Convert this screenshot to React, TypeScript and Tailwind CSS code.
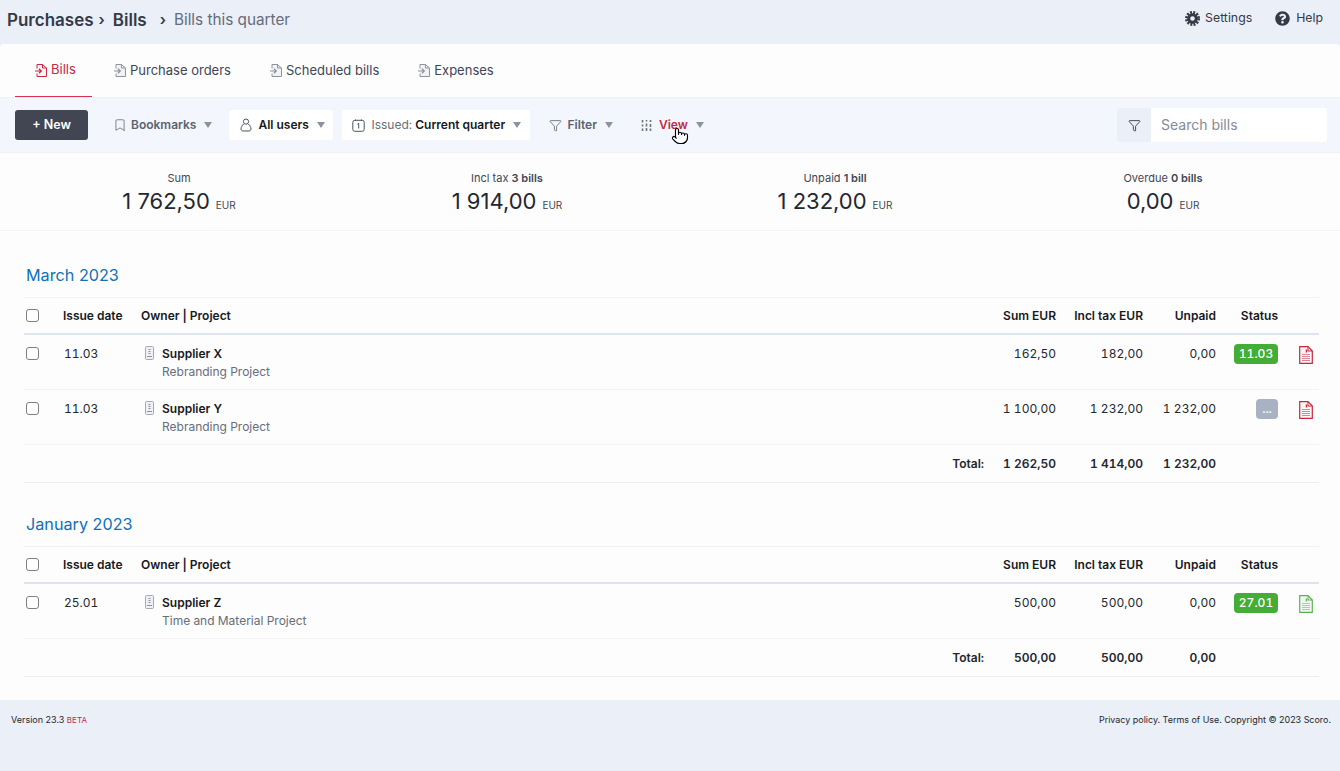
import React from 'react';
import { Bookmark, Funnel, Pointer } from 'lucide-react';
import { FaQuestionCircle } from 'react-icons/fa';

const rowGrid = 'grid grid-cols-[39px_78px_1fr_72px_87px_73px_62px_41px]';

function Caret() {
  return <span className="ml-[8px] h-0 w-0 border-x-[4.5px] border-t-[6px] border-x-transparent border-t-[#8b92a0]" />;
}

function GearIcon() {
  return (
    <svg width="15" height="15" viewBox="0 0 15 15" fill="none" stroke="#343a46" className="mr-[5px]">
      <circle cx="7.5" cy="7.500" r="6" strokeWidth="3" strokeDasharray="1.900 1.240" />
      <circle cx="7.5" cy="7.500" r="3.800" strokeWidth="3" />
    </svg>
  );
}

function TabIcon({ color, fill, scheduled }: { color: string; fill: string; scheduled?: boolean }) {
  return (
    <svg width="14" height="15" viewBox="0 0 14 15" fill="none" stroke={color} strokeWidth="1" className="shrink-0">
      <path d={scheduled ? 'M3 4.500V1.500h5.500L12.500 5v5M9.500 13.500H7' : 'M3 5.500V1.500h5.500L12.500 5v8.500H3V10.500'} fill={fill} />
      <path d="M8.500 1.500V5h4" />
      <path d="M1 8h6M5 5.800l2.300 2.200L5 10.200" strokeWidth="1.200" />
      {scheduled && <path d="M1.500 11.500a3.300 3.300 0 0 0 4.500 2.300" strokeDasharray="1.800 1" />}
    </svg>
  );
}

function UserIcon() {
  return (
    <svg width="12" height="14" viewBox="0 0 12 14" fill="none" stroke="#4b5361" strokeWidth="1">
      <circle cx="6" cy="3.600" r="2.600" />
      <path d="M3.600 6C2.200 7.400 1 9.200 1 11c0 1.300 1 2 2 2h6c1 0 2-.7 2-2 0-1.800-1.200-3.600-2.600-5" />
    </svg>
  );
}

function CalendarIcon() {
  return (
    <svg width="13" height="13" viewBox="0 0 13 13" fill="none" stroke="#4b5361" strokeWidth="1">
      <rect x="0.800" y="1.300" width="11.400" height="11" rx="2" />
      <path d="M3.500 0.500v1.500M9.500 0.500v1.500M5.400 5.200l1.300-.9v5.200" />
    </svg>
  );
}

function ViewIcon() {
  return (
    <svg width="11" height="11" viewBox="0 0 11 11" stroke="#6b7280" strokeWidth="1.600" fill="none">
      <path d="M1.500 0v2.500M1.500 4.500v2M1.500 8.500v2.500M5.500 0v1.500M5.500 3.500v3M5.500 8v3M9.500 0v2M9.500 4v3M9.500 8.500v2.500" />
    </svg>
  );
}

function SupplierIcon() {
  return (
    <svg width="9" height="14" viewBox="0 0 9 14" fill="none" className="mt-px shrink-0">
      <rect x="0.500" y="0.500" width="8" height="13" rx="1" fill="#eef0f4" stroke="#a3a9b5" strokeWidth="1" />
      <path d="M3.500 3.500h2M3.500 5.500h2M3.500 7.500h2M2 10.500h5" stroke="#8c93a0" strokeWidth="1" />
    </svg>
  );
}

function BillIcon({ color, light }: { color: string; light: string }) {
  return (
    <svg width="14" height="18" viewBox="0 0 14 18" fill="none">
      <path d="M.7.700h8.300l4.300 4.300v12.300H.7z" fill={light} stroke={color} strokeWidth="1.200" />
      <path d="M9 .7v4.300h4.300" stroke={color} strokeWidth="1" />
      <path d="M7.500 3.500v3" stroke={color} strokeWidth="1.500" />
      <path d="M3 8.500h8M3 10.500h8M3 12.500h8M3 14.500h8" stroke={color} strokeOpacity="0.55" strokeWidth="1" />
    </svg>
  );
}

function Checkbox({ className = '' }: { className?: string }) {
  return <span className={`ml-[2px] block h-[13px] w-[13px] rounded-[3px] border border-[#7d7f85] bg-white ${className}`} />;
}

function Tab({ label, active, scheduled, className }: { label: string; active?: boolean; scheduled?: boolean; className: string }) {
  return (
    <div className={`flex h-[53px] items-center gap-[3px] ${className} ${active ? 'border-b border-[#d8304f] text-[#c22a47]' : 'text-[#3f4653]'}`}>
      <TabIcon color={active ? '#c22a47' : '#8d939f'} fill={active ? '#fdf3f5' : '#f1f2f5'} scheduled={scheduled} />
      <span>{label}</span>
    </div>
  );
}

function Summary({ label, bold, value }: { label: string; bold?: string; value: string }) {
  return (
    <div className="flex w-[328px] flex-col items-center">
      <div className="text-[11px] leading-[14px] text-[#3f4653]">
        {label} {bold && <b className="font-semibold">{bold}</b>}
      </div>
      <div className="mt-[2px] flex items-baseline text-[22px] leading-[28px] text-[#23272f]">
        {value}
        <span className="ml-[6px] text-[10px] text-[#3f4653]">EUR</span>
      </div>
    </div>
  );
}

function HeaderRow() {
  return (
    <div className={`${rowGrid} h-[38px] items-center border-t border-b-2 border-t-[#f1f2f4] border-b-[#dde3ef] text-[12px] font-semibold text-[#17191d]`}>
      <Checkbox />
      <div>Issue date</div>
      <div>Owner | Project</div>
      <div className="text-right">Sum EUR</div>
      <div className="text-right">Incl tax EUR</div>
      <div className="text-right">Unpaid</div>
      <div className="text-right">Status</div>
      <div />
    </div>
  );
}

function BillRow({ date, name, project, sum, tax, unpaid, status, paid, green }: {
  date: string; name: string; project: string; sum: string; tax: string; unpaid: string; status: string; paid?: boolean; green?: boolean;
}) {
  return (
    <div className={`${rowGrid} h-[55px] border-b border-[#f2f3f5] pt-[10px] text-[12px] leading-[18px] tabular-nums text-[#23272f]`}>
      <Checkbox className="mt-[2px]" />
      <div className="pl-px">{date}</div>
      <div className="flex pl-[4px]">
        <SupplierIcon />
        <div className="ml-[8px]">
          <div className="font-semibold text-[#17191d]">{name}</div>
          <div className="text-[#676d79]">{project}</div>
        </div>
      </div>
      <div className="text-right">{sum}</div>
      <div className="text-right">{tax}</div>
      <div className="text-right">{unpaid}</div>
      <div className="flex justify-end">
        <span className={`-mt-px flex h-[20px] items-center justify-center rounded-[4px] text-[12px] font-medium text-white ${paid ? 'w-[44px] bg-[#43ad35]' : 'w-[22px] bg-[#a9b2c2]'}`}>
          {status}
        </span>
      </div>
      <div className="flex justify-end pr-[6px] pt-px">
        {green ? <BillIcon color="#5cb256" light="#f1f8f0" /> : <BillIcon color="#c8263f" light="#fdf6f7" />}
      </div>
    </div>
  );
}

function TotalRow({ sum, tax, unpaid }: { sum: string; tax: string; unpaid: string }) {
  return (
    <div className={`${rowGrid} h-[38px] items-center border-b border-[#eceef1] text-[12px] font-semibold tabular-nums text-[#23272f]`}>
      <div />
      <div />
      <div className="text-right">Total:</div>
      <div className="text-right">{sum}</div>
      <div className="text-right">{tax}</div>
      <div className="text-right">{unpaid}</div>
      <div />
      <div />
    </div>
  );
}

export default function App() {
  return (
    <div className="flex h-[771px] flex-col overflow-hidden bg-[#eaeff8] font-['Inter',sans-serif] text-[13px]">
      {/* breadcrumbs */}
      <div className="flex h-[44px] items-start justify-between pl-[7px] pr-[17px]">
        <div className="mt-[8px] flex items-center text-[17px] font-semibold leading-[24px] text-[#343a46]">
          <span>Purchases</span>
          <span className="ml-[5px] text-[15px]">›</span>
          <span className="ml-[8px]">Bills</span>
          <span className="ml-[13px] text-[15px]">›</span>
          <span className="ml-[8px] text-[15.300px] font-normal text-[#666c78]">Bills this quarter</span>
        </div>
        <div className="mt-[9px] flex h-[18px] items-center text-[12.300px] text-[#343a46]">
          <GearIcon />
          <span>Settings</span>
          <FaQuestionCircle size={15} className="ml-[23px] mr-[6px]" />
          <span>Help</span>
        </div>
      </div>

      <div className="flex-1 overflow-hidden rounded-t-[4px] bg-[#fdfdfe]">
        <div className="flex h-[54px] border-b border-[#eef1f6] pl-[15px]">
          <Tab label="Bills" active className="w-[77px] pl-[19px]" />
          <Tab label="Purchase orders" className="ml-[21px]" />
          <Tab label="Scheduled bills" className="ml-[38px]" />
          <Tab label="Expenses" className="ml-[38px]" />
        </div>

        {/* toolbar */}
        <div className="flex h-[55px] items-center border-b border-[#eef1f6] bg-[#f3f6fd] pl-[15px] pr-[13px] text-[12px] font-semibold">
          <button className="h-[30px] w-[73px] rounded-[3px] bg-[#414652] text-[12.500px] text-white">+ New</button>
          <div className="ml-[25px] flex items-center text-[#5b6371]">
            <Bookmark size={14} strokeWidth={1.300} className="mr-[4px]" />
            Bookmarks
            <Caret />
          </div>
          <div className="ml-[17px] flex h-[30px] w-[104px] items-center rounded-[3px] bg-white pl-[11px] text-[#17191d]">
            <UserIcon />
            <span className="ml-[6px]">All users</span>
            <Caret />
          </div>
          <div className="ml-[9px] flex h-[30px] w-[188px] items-center rounded-[3px] bg-white pl-[10px] text-[#17191d]">
            <CalendarIcon />
            <span className="ml-[6px] font-normal text-[#676d79]">Issued:</span>
            <span className="ml-[3px]">Current quarter</span>
            <Caret />
          </div>
          <div className="ml-[19px] flex items-center text-[#5b6371]">
            <Funnel size={13} strokeWidth={1.500} className="mr-[5px]" />
            Filter
            <Caret />
          </div>
          <div className="relative ml-[28px] flex items-center text-[#c22a47]">
            <ViewIcon />
            <span className="ml-[7px]">View</span>
            <Caret />
            <Pointer size={18} strokeWidth={1.500} fill="#ffffff" className="absolute left-[30px] top-[11px] text-black" />
          </div>
          <div className="ml-auto flex h-[34px] w-[210px] overflow-hidden rounded-[3px] bg-white">
            <div className="flex w-[34px] items-center justify-center bg-[#eaeff8]">
              <Funnel size={13} strokeWidth={1.500} className="text-[#23272f]" />
            </div>
            <div className="flex items-center pb-[2px] pl-[10px] text-[14px] font-normal text-[#858b98]">Search bills</div>
          </div>
        </div>

        {/* totals */}
        <div className="flex h-[78px] border-b border-[#f3f5fa] pl-[15px] pt-[18px]">
          <Summary label="Sum" value="1 762,50" />
          <Summary label="Incl tax" bold="3 bills" value="1 914,00" />
          <Summary label="Unpaid" bold="1 bill" value="1 232,00" />
          <Summary label="Overdue" bold="0 bills" value="0,00" />
        </div>

        {/* bill groups */}
        <div className="pl-[24px] pr-[21px]">
          <h2 className="flex h-[66px] items-end pb-[10px] pl-[2px] text-[16.200px] text-[#0f71b8]">March 2023</h2>
          <HeaderRow />
          <BillRow date="11.03" name="Supplier X" project="Rebranding Project" sum="162,50" tax="182,00" unpaid="0,00" status="11.03" paid />
          <BillRow date="11.03" name="Supplier Y" project="Rebranding Project" sum="1 100,00" tax="1 232,00" unpaid="1 232,00" status="..." />
          <TotalRow sum="1 262,50" tax="1 414,00" unpaid="1 232,00" />
          <h2 className="flex h-[63px] items-end pb-[10px] pl-[2px] text-[16.200px] text-[#0f71b8]">January 2023</h2>
          <HeaderRow />
          <BillRow date="25.01" name="Supplier Z" project="Time and Material Project" sum="500,00" tax="500,00" unpaid="0,00" status="27.01" paid green />
          <TotalRow sum="500,00" tax="500,00" unpaid="0,00" />
        </div>
      </div>

      {/* footer */}
      <div className="flex h-[71px] justify-between px-[9px] pt-[14px] text-[8.950px] leading-[12px] text-[#23272f]">
        <div className="pl-[2px] text-[9px]">
          Version 23.3 <span className="text-[8px] text-[#c22a47]">BETA</span>
        </div>
        <div>Privacy policy. Terms of Use. Copyright © 2023 Scoro.</div>
      </div>
    </div>
  );
}
